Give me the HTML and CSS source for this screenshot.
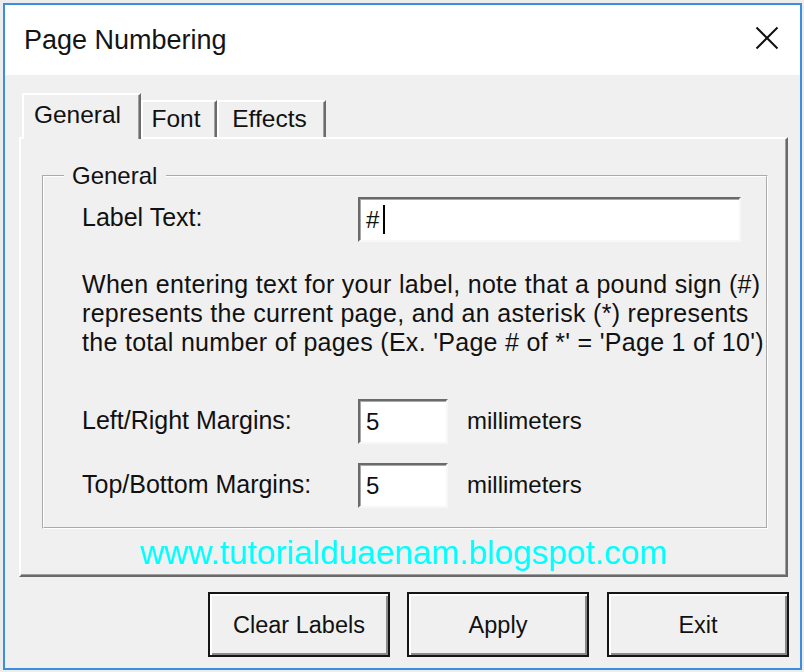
FILE: index.html
```html
<!DOCTYPE html>
<html>
<head>
<meta charset="utf-8">
<title>Page Numbering</title>
<link rel="stylesheet" href="styles.css">
</head>
<body>
<div class="window">
  <div class="titlebar">
    <span class="title">Page Numbering</span>
    <svg class="close" width="24" height="24" viewBox="0 0 24 24"><path d="M1.5 1.5 L22.5 22.5 M22.5 1.5 L1.5 22.5" stroke="#111" stroke-width="2" fill="none"/></svg>
  </div>
  <div class="client">
    <div class="tabs">
      <div class="tab active">General</div>
      <div class="tab tab-font">Font</div>
      <div class="tab tab-effects">Effects</div>
    </div>
    <div class="panel">
      <fieldset class="group">
        <legend>General</legend>
        <div class="group-body">
          <div class="row">
            <span class="lbl lbl-first">Label Text:</span>
            <div class="field wide">#<span class="caret"></span></div>
          </div>
          <p class="note">When entering text for your label, note that a pound sign (#)<br>represents the current page, and an asterisk (*) represents<br>the total number of pages (Ex. 'Page # of *' = 'Page 1 of 10')</p>
          <div class="row row-margin">
            <span class="lbl">Left/Right Margins:</span>
            <div class="field short">5</div>
            <span class="unit">millimeters</span>
          </div>
          <div class="row row-margin2">
            <span class="lbl">Top/Bottom Margins:</span>
            <div class="field short">5</div>
            <span class="unit">millimeters</span>
          </div>
        </div>
      </fieldset>
      <div class="url">www.tutorialduaenam.blogspot.com</div>
    </div>
    <div class="buttons">
      <div class="btn">Clear Labels</div>
      <div class="btn">Apply</div>
      <div class="btn btn-exit">Exit</div>
    </div>
  </div>
</div>
</body>
</html>
```
FILE: styles.css
```css
html, body {
  margin: 0;
  padding: 0;
  background: #ededed;
}

.window {
  margin: 3px 0 0 3px;
  width: 799px;
  box-sizing: border-box;
  border: 2px solid #3a8fe0;
  background: #f0f0f0;
  display: flex;
  flex-direction: column;
  font-family: "Liberation Sans", Arial, sans-serif;
  color: #111;
}

.titlebar {
  height: 70px;
  background: #fff;
  display: flex;
  align-items: center;
  justify-content: space-between;
  padding: 0 21px 0 19px;
}

.title {
  font-size: 27px;
  line-height: 30px;
  color: #141414;
}

.close {
  display: block;
  margin-bottom: 4px;
}

.client {
  padding: 18px 12px 11px 14px;
  display: flex;
  flex-direction: column;
}

.tabs {
  display: flex;
  align-items: flex-end;
  padding-left: 3px;
}

.tab {
  box-sizing: border-box;
  height: 37px;
  border-top: 2px solid #fff;
  border-left: 2px solid #fff;
  border-right: 2px solid #6b6b6b;
  box-shadow: inset -1px 0 0 #a0a0a0;
  background: #f0f0f0;
  font-size: 24.5px;
  line-height: 33px;
  text-align: center;
  padding-right: 4px;
}

.tab.active {
  width: 119px;
  height: 46px;
  line-height: 39px;
  margin-bottom: -2px;
  position: relative;
  z-index: 1;
  padding-right: 8px;
}

.tab-font {
  width: 76px;
  padding-right: 6px;
}

.tab-effects {
  width: 109px;
}

.panel {
  border: 2px solid;
  border-color: #fff #696969 #696969 #fff;
  box-shadow: inset -1px -1px 0 #a0a0a0;
  padding: 24px 0 3px 0;
}

.group {
  margin: 0 18px 0 21px;
  padding: 0;
  border: 2px groove #fff;
  min-width: 0;
}

.group legend {
  margin-left: 20px;
  padding: 0 9px 0 8px;
  font-size: 24px;
  line-height: 26px;
}

.group-body {
  padding: 8px 0 19px 38px;
}

.row {
  display: flex;
  align-items: center;
  height: 45px;
}

.row-margin {
  margin-top: 42px;
}

.row-margin2 {
  margin-top: 19px;
}

.lbl {
  width: 276px;
  font-size: 25px;
  line-height: 43px;
  padding-bottom: 2px;
  flex: none;
}

.lbl-first {
  line-height: 41px;
  padding-bottom: 4px;
}

.field {
  box-sizing: border-box;
  height: 45px;
  background: #fff;
  border: 2px solid;
  border-color: #6a6a6a #f7f7f7 #f7f7f7 #6a6a6a;
  box-shadow: inset 1px 1px 0 #a8a8a8;
  font-size: 24px;
  line-height: 41px;
  padding-left: 6px;
  display: flex;
  align-items: center;
  color: #111;
}

.wide {
  width: 383px;
}

.short {
  width: 90px;
}

.caret {
  display: inline-block;
  width: 2px;
  height: 29px;
  background: #000;
  margin-left: 4px;
}

.unit {
  margin-left: 19px;
  font-size: 24px;
  line-height: 43px;
  padding-bottom: 2px;
}

.note {
  margin: 28px 0 0 0;
  font-size: 25px;
  line-height: 29px;
  letter-spacing: 0.3px;
}

.url {
  margin-top: 5px;
  font-size: 33.4px;
  line-height: 38px;
  text-align: center;
  color: #00ffff;
}

.buttons {
  display: flex;
  justify-content: flex-end;
  gap: 17px;
  margin: 15px -1px 0 0;
}

.btn {
  box-sizing: border-box;
  width: 182px;
  height: 65px;
  border: 2px solid #151515;
  box-shadow: inset 2px 2px 0 #fff, inset -2px -2px 0 #8a8a8a;
  background: #f0f0f0;
  font-size: 23.5px;
  line-height: 63px;
  text-align: center;
}

.btn-exit {
  margin-left: 1px;
}
```
